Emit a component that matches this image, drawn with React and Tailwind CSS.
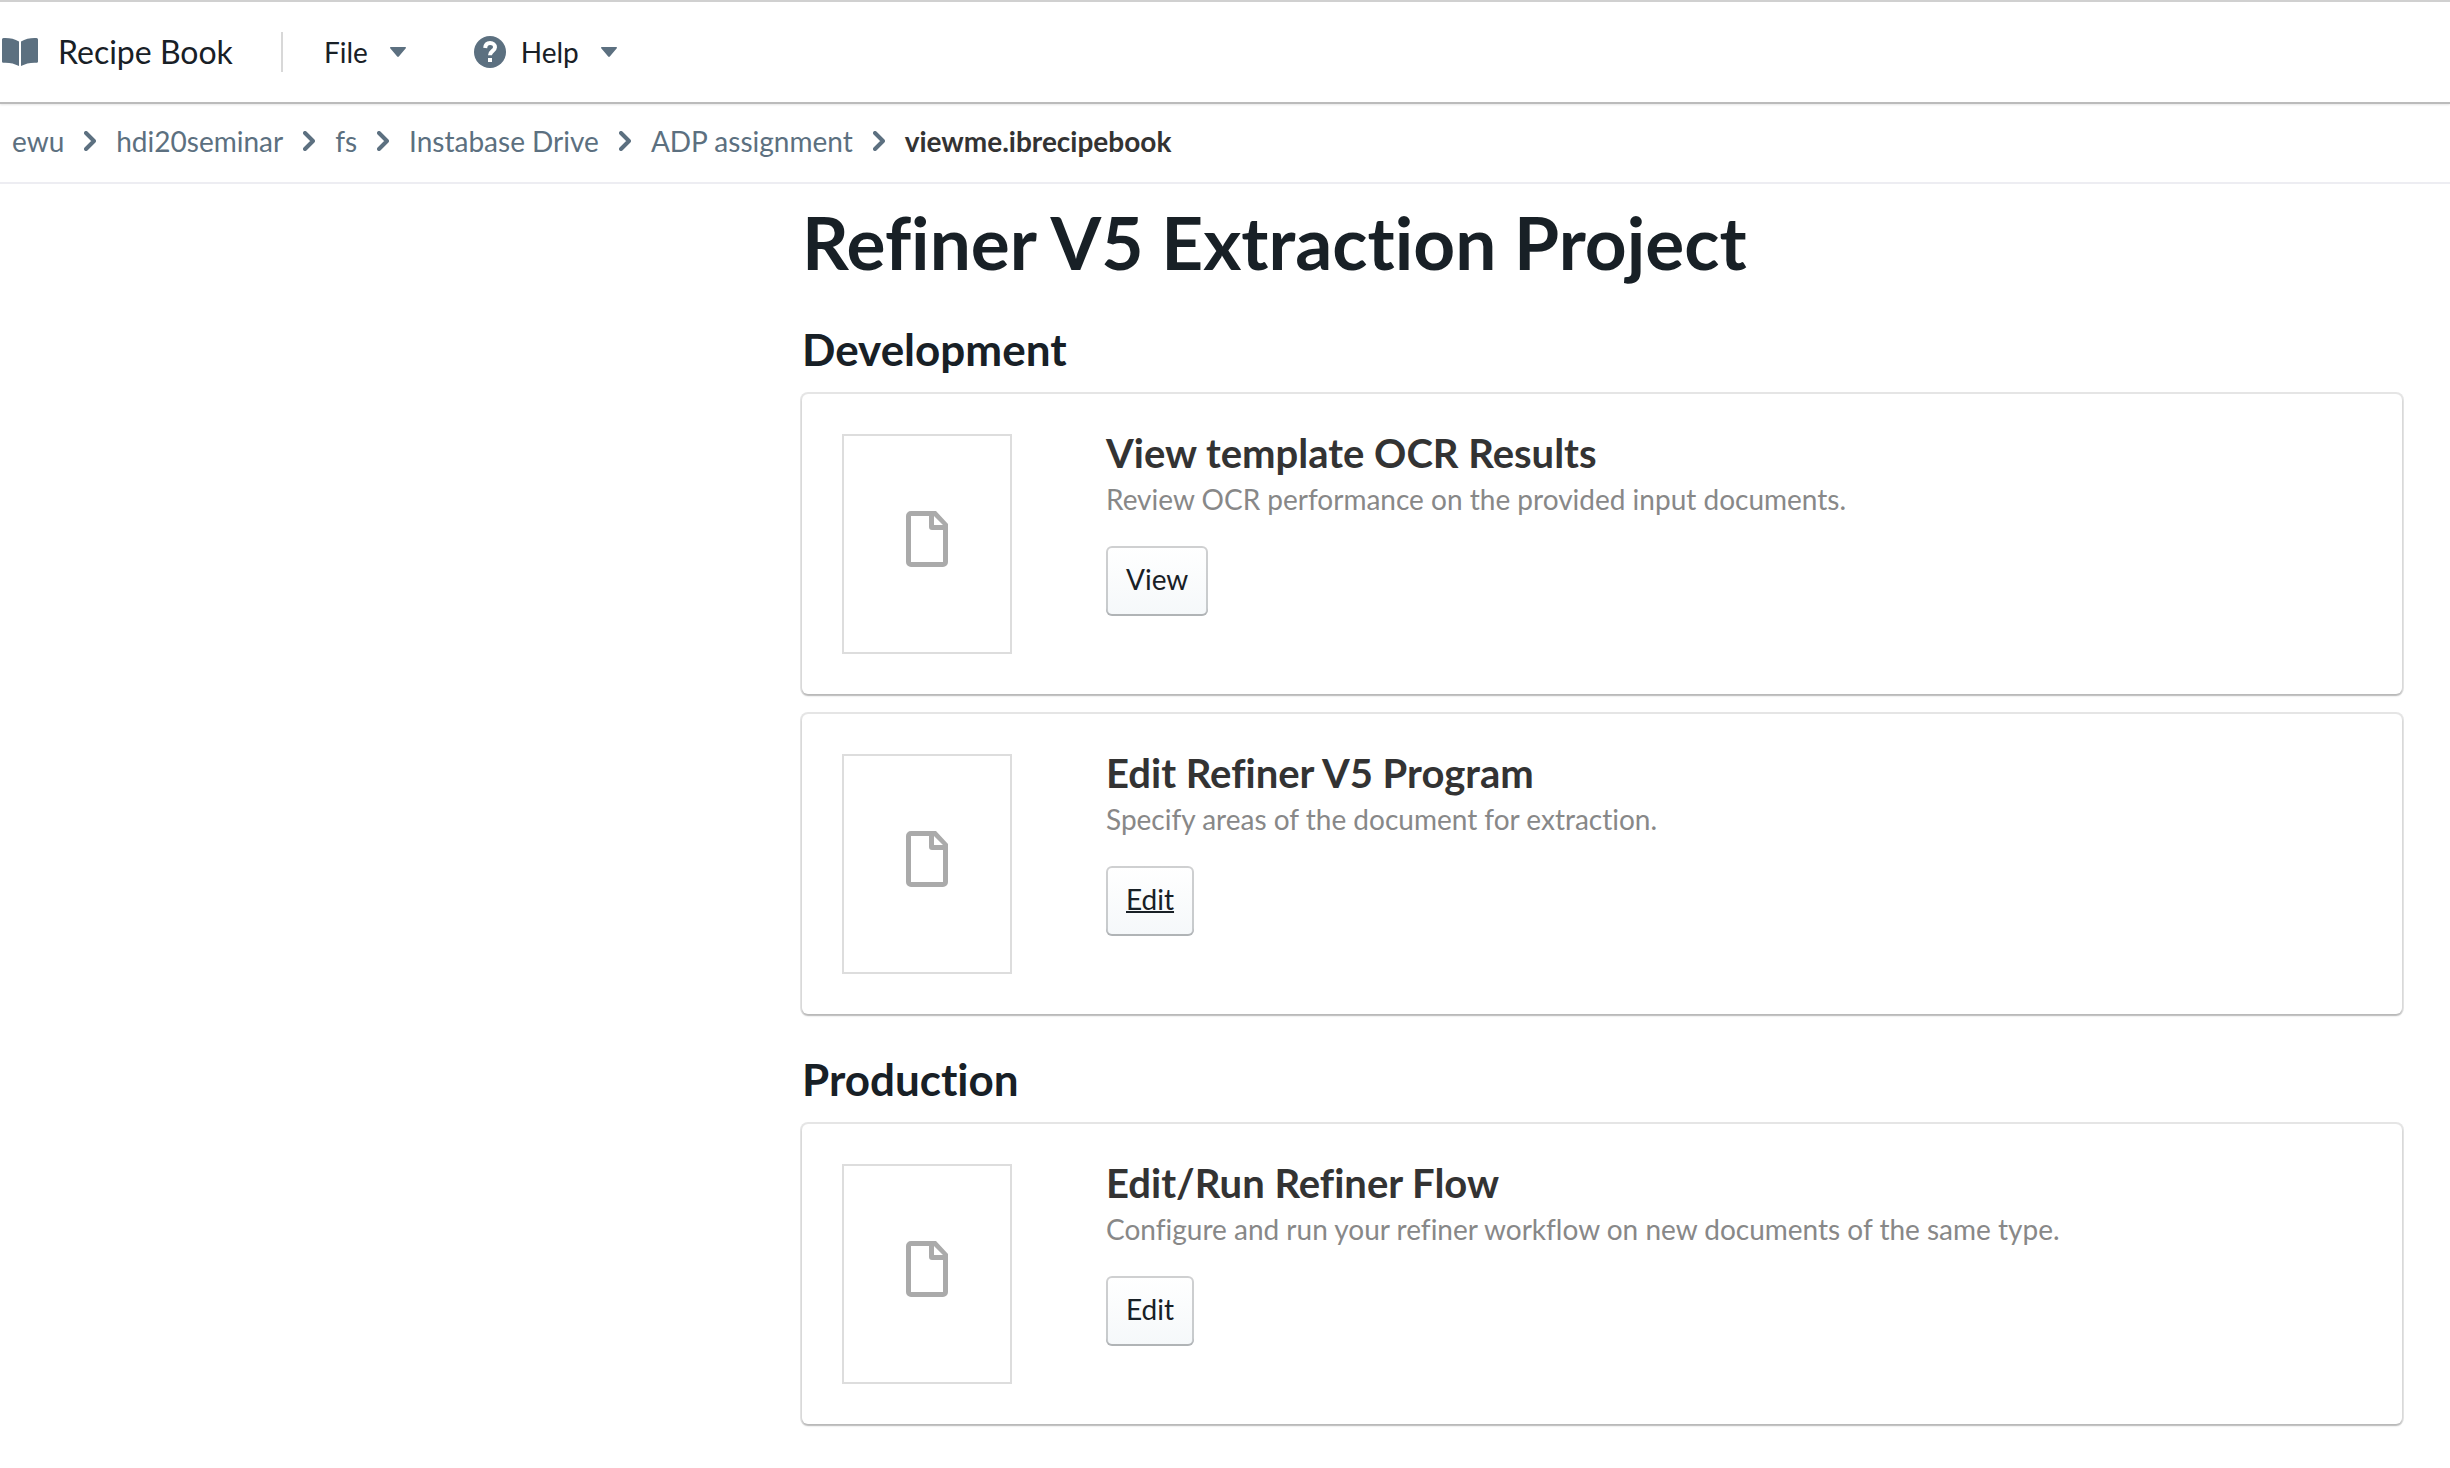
const BookIcon = () => (
  <svg aria-hidden="true" className="ml-[2px] h-[28px] w-[36px] shrink-0" viewBox="0 0 36 28" fill="#5c7080">
    <path d="M0 1.8C0 .8.6.2 1.6.1 7-.2 12.500.8 17 3.600V28C12.500 25.600 7.500 24.400 1.800 24.700.8 24.700 0 24.400 0 23.400Z" />
    <path d="M36 1.800C36 .8 35.400.2 34.400.1 29-.2 23.500.8 19 3.600V28C23.500 25.600 28.500 24.400 34.200 24.700 35.200 24.700 36 24.400 36 23.400Z" />
  </svg>
);

const HelpIcon = () => (
  <svg aria-hidden="true" className="h-8 w-8 shrink-0" viewBox="0 0 32 32">
    <circle cx="16" cy="16" r="16" fill="#5c7080" />
    <path d="M11.200 12C11.400 8.900 13.200 7 16.100 7C19 7 21 8.700 21 11.200C21 14.800 16 15 16 19.200" fill="none" stroke="#fff" strokeWidth="4" />
    <rect x="14" y="22" width="4" height="4" fill="#fff" />
  </svg>
);

const CaretIcon = () => (
  <svg aria-hidden="true" className="h-[10px] w-4 shrink-0" viewBox="0 0 16 10" fill="#5c7080">
    <path d="M.8 0H15.200C16 0 16.200.6 15.800 1.200L8.800 9.500C8.300 10.100 7.700 10.100 7.200 9.500L.2 1.200C-.2.600 0 0 .8 0Z" />
  </svg>
);

const ChevronIcon = () => (
  <svg aria-hidden="true" className="h-5 w-3 shrink-0" viewBox="0 0 12 20" fill="none" stroke="#5c7080" strokeWidth="4" strokeLinecap="round" strokeLinejoin="round">
    <path d="M2 2L10 10L2 18" />
  </svg>
);

const DocumentIcon = () => (
  <svg aria-hidden="true" className="h-14 w-[42px]" viewBox="0 0 42 56" fill="#aaa">
    <path fillRule="evenodd" d="M5 0H30L42 13V51A5 5 0 0 1 37 56H5A5 5 0 0 1 0 51V5A5 5 0 0 1 5 0ZM5 5V51H37V19H26A3 3 0 0 1 23 16V5ZM28 5V14H37Z" />
  </svg>
);

const crumbs = ["ewu", "hdi20seminar", "fs", "Instabase Drive", "ADP assignment"];

const sections = [
  {
    title: "Development",
    cards: [
      { title: "View template OCR Results", text: "Review OCR performance on the provided input documents.", action: "View" },
      { title: "Edit Refiner V5 Program", text: "Specify areas of the document for extraction.", action: "Edit", active: true },
    ],
  },
  {
    title: "Production",
    cards: [
      { title: "Edit/Run Refiner Flow", text: "Configure and run your refiner workflow on new documents of the same type.", action: "Edit" },
    ],
  },
];

function Card({ title, text, action, active }) {
  return (
    <article className="flex rounded-[6px] bg-white p-10 shadow-[0_0_0_2px_rgba(0,0,0,0.1),0_2px_2px_rgba(0,0,0,0.2)]">
      <div className="flex h-[220px] w-[170px] shrink-0 justify-center border-2 border-[#ddd] pt-[75px]">
        <DocumentIcon />
      </div>
      <div className="ml-[94px] min-w-0">
        <h3 className="text-[40px] leading-[38px] font-bold text-[#333]">{title}</h3>
        <p className="mt-[6px] text-[28px] leading-[42px] text-[#888]">{text}</p>
        <a
          href="#"
          className={
            "mt-[26px] inline-flex h-[70px] items-center rounded-[6px] bg-linear-to-b from-white to-[#f5f8fa] px-5 pb-1 text-[28px] leading-9 text-[#182026] shadow-[inset_0_0_0_2px_rgba(16,22,26,0.2),inset_0_-2px_0_rgba(16,22,26,0.12)] " +
            (active ? "underline decoration-2" : "hover:underline")
          }
        >
          {action}
        </a>
      </div>
    </article>
  );
}

export default function App() {
  return (
    <div className="min-h-screen bg-white font-['Lato',sans-serif] text-[28px] text-[#182026] [font-variant-ligatures:none]">
      <header className="flex h-[104px] items-center border-t-2 border-b-2 border-t-[#d0d0d0] border-b-[#bbb] shadow-[0_1px_2px_rgba(0,0,0,0.1)]">
        <BookIcon />
        <span className="ml-5 text-[32px] leading-10">Recipe Book</span>
        <div className="ml-12 h-10 w-[2px] bg-[#d8d8d8]" />
        <button type="button" className="ml-[41px] flex items-center gap-[22px] leading-9">
          File
          <CaretIcon />
        </button>
        <button type="button" className="ml-[68px] flex items-center leading-9">
          <HelpIcon />
          <span className="mr-[22px] ml-[15px]">Help</span>
          <CaretIcon />
        </button>
      </header>

      <nav aria-label="Breadcrumb" className="flex h-20 items-center gap-5 border-b-2 border-[#ededf2] px-3 pb-1 leading-9">
        {crumbs.map((c) => (
          <span key={c} className="flex items-center gap-5">
            <a href="#" className="text-[#5c7080]">{c}</a>
            <ChevronIcon />
          </span>
        ))}
        <span aria-current="page" className="font-bold text-[#333]">viewme.ibrecipebook</span>
      </nav>

      <main className="flex justify-end px-12 pt-4 pb-10">
        <div className="w-full max-w-[1600px]">
          <h1 className="text-[73px] leading-[84px] font-bold">Refiner V5 Extraction Project</h1>
          {sections.map((s) => (
            <section key={s.title} className="mt-10">
              <h2 className="text-[44px] leading-[50px] font-bold">{s.title}</h2>
              <div className="mt-5 flex flex-col gap-5">
                {s.cards.map((c) => (
                  <Card key={c.title} {...c} />
                ))}
              </div>
            </section>
          ))}
        </div>
      </main>
    </div>
  );
}
